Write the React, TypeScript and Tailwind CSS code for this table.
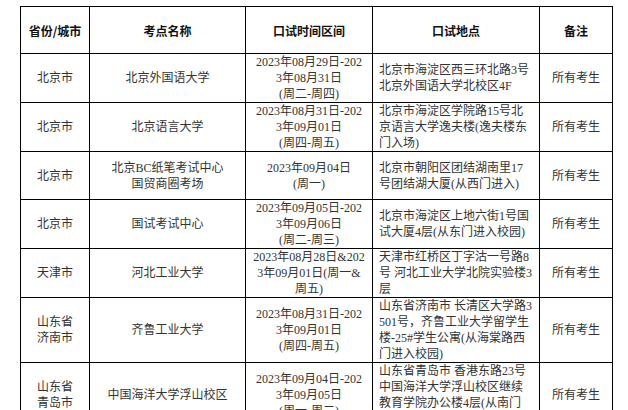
const rows = [
  {
    city: ["北京市"],
    name: ["北京外国语大学"],
    time: ["2023年08月29日-202", "3年08月31日", "(周二-周四)"],
    place: ["北京市海淀区西三环北路3号", "北京外国语大学北校区4F"],
  },
  {
    city: ["北京市"],
    name: ["北京语言大学"],
    time: ["2023年08月31日-202", "3年09月01日", "(周四-周五)"],
    place: ["北京市海淀区学院路15号北", "京语言大学逸夫楼(逸夫楼东", "门入场)"],
  },
  {
    city: ["北京市"],
    name: ["北京BC纸笔考试中心", "国贸商圈考场"],
    time: ["2023年09月04日", "(周一)"],
    place: ["北京市朝阳区团结湖南里17", "号团结湖大厦(从西门进入)"],
    tall: true,
  },
  {
    city: ["北京市"],
    name: ["国试考试中心"],
    time: ["2023年09月05日-202", "3年09月06日", "(周二-周三)"],
    place: ["北京市海淀区上地六街1号国", "试大厦4层(从东门进入校园)"],
  },
  {
    city: ["天津市"],
    name: ["河北工业大学"],
    time: ["2023年08月28日&202", "3年09月01日(周一&", "周五)"],
    place: ["天津市红桥区丁字沽一号路8", "号 河北工业大学北院实验楼3", "层"],
  },
  {
    city: ["山东省", "济南市"],
    name: ["齐鲁工业大学"],
    time: ["2023年08月31日-202", "3年09月01日", "(周四-周五)"],
    place: ["山东省济南市 长清区大学路3", "501号，齐鲁工业大学留学生", "楼-25#学生公寓(从海棠路西", "门进入校园)"],
  },
  {
    city: ["山东省", "青岛市"],
    name: ["中国海洋大学浮山校区"],
    time: ["2023年09月04日-202", "3年09月05日", "(周一-周二)"],
    place: ["山东省青岛市 香港东路23号", "中国海洋大学浮山校区继续", "教育学院办公楼4层(从南门", "进入)"],
  },
]

function Lines({ lines }: { lines: string[] }) {
  return (
    <>
      {lines.map((l, i) => (
        <div key={i}>{l}</div>
      ))}
    </>
  )
}

export default function App() {
  const cell = "border border-black p-0 align-middle whitespace-nowrap"
  return (
    <div className="w-[628px] h-[410px] overflow-hidden bg-white pl-[20px] pt-[6px] text-[12px] leading-[16px] text-[#333] font-['Liberation_Serif','Noto_Sans_CJK_SC',serif]">
      <table className="table-fixed border-collapse w-[592px]">
        <colgroup>
          <col className="w-[69px]" />
          <col className="w-[156px]" />
          <col className="w-[127px]" />
          <col className="w-[167px]" />
          <col className="w-[73px]" />
        </colgroup>
        <thead>
          <tr className="h-[47px] font-bold text-[#111] font-['Noto_Sans_CJK_SC',sans-serif]">
            <th className={`${cell} text-center pt-[2px]`}>省份/城市</th>
            <th className={`${cell} text-center pt-[2px]`}>考点名称</th>
            <th className={`${cell} text-center pt-[2px]`}>口试时间区间</th>
            <th className={`${cell} text-center pt-[2px]`}>口试地点</th>
            <th className={`${cell} text-center pt-[2px]`}>备注</th>
          </tr>
        </thead>
        <tbody>
          {rows.map((r, i) => (
            <tr key={i} className={r.tall ? "h-[48px]" : ""}>
              <td className={`${cell} text-center`}>
                <Lines lines={r.city} />
              </td>
              <td className={`${cell} text-center`}>
                <Lines lines={r.name} />
              </td>
              <td className={`${cell} text-center`}>
                <Lines lines={r.time} />
              </td>
              <td className={`${cell} text-left pl-[6px]`}>
                <Lines lines={r.place} />
              </td>
              <td className={`${cell} text-center`}>所有考生</td>
            </tr>
          ))}
        </tbody>
      </table>
    </div>
  )
}
